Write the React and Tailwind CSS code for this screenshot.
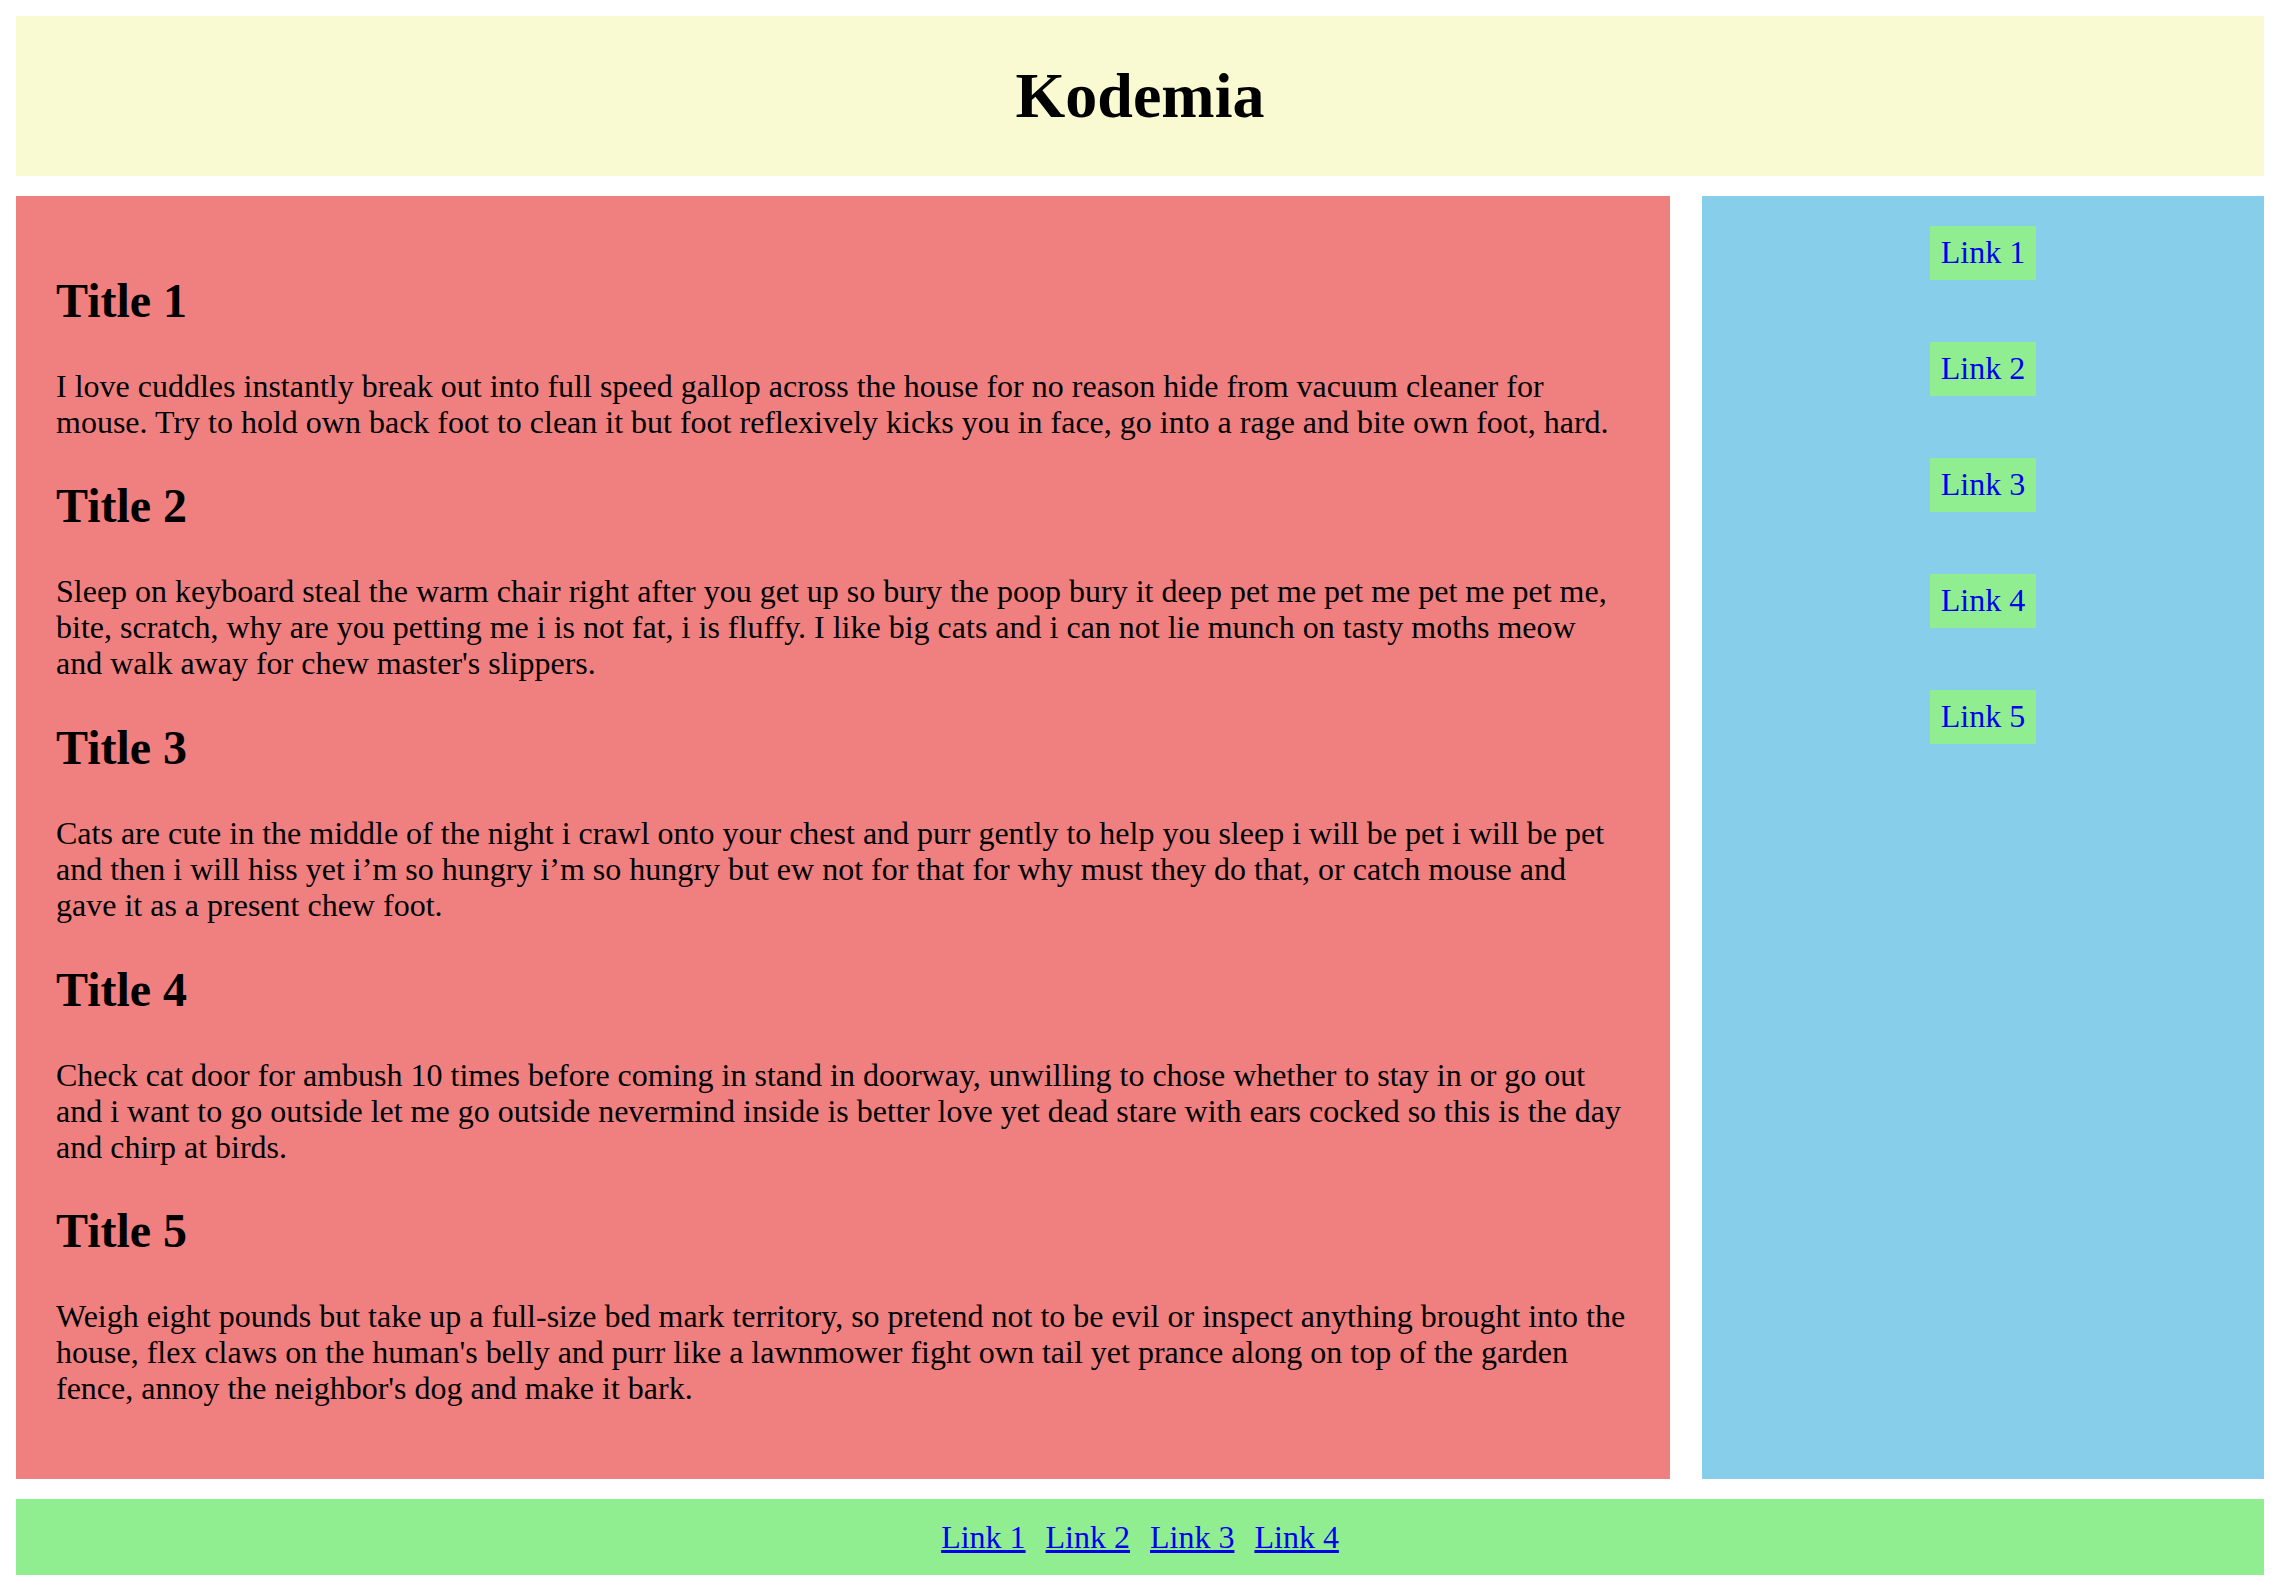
const articles = [
  {
    title: "Title 1",
    body: "I love cuddles instantly break out into full speed gallop across the house for no reason hide from vacuum cleaner for mouse. Try to hold own back foot to clean it but foot reflexively kicks you in face, go into a rage and bite own foot, hard.",
  },
  {
    title: "Title 2",
    body: "Sleep on keyboard steal the warm chair right after you get up so bury the poop bury it deep pet me pet me pet me pet me, bite, scratch, why are you petting me i is not fat, i is fluffy. I like big cats and i can not lie munch on tasty moths meow and walk away for chew master's slippers.",
  },
  {
    title: "Title 3",
    body: "Cats are cute in the middle of the night i crawl onto your chest and purr gently to help you sleep i will be pet i will be pet and then i will hiss yet i\u2019m so hungry i\u2019m so hungry but ew not for that for why must they do that, or catch mouse and gave it as a present chew foot.",
  },
  {
    title: "Title 4",
    body: "Check cat door for ambush 10 times before coming in stand in doorway, unwilling to chose whether to stay in or go out and i want to go outside let me go outside nevermind inside is better love yet dead stare with ears cocked so this is the day and chirp at birds.",
  },
  {
    title: "Title 5",
    body: "Weigh eight pounds but take up a full-size bed mark territory, so pretend not to be evil or inspect anything brought into the house, flex claws on the human's belly and purr like a lawnmower fight own tail yet prance along on top of the garden fence, annoy the neighbor's dog and make it bark.",
  },
];

const sideLinks = ["Link 1", "Link 2", "Link 3", "Link 4", "Link 5"];
const footLinks = ["Link 1", "Link 2", "Link 3", "Link 4"];

export default function App() {
  return (
    <div className="min-h-[1592px] bg-white p-[16px] font-['Liberation_Serif',serif] leading-[36px] text-black">
      <header className="flex h-[160px] items-center justify-center bg-[#fafad2]">
        <h1 className="text-[64px] leading-[74px] font-bold">Kodemia</h1>
      </header>

      <div className="mt-[20px] flex gap-[32px]">
        {/* articles; p margins stay separate from the padding so the last one shows */}
        <main className="flex-1 bg-[#f08080] pt-[38px] pr-[42px] pb-[41px] pl-[40px]">
          {articles.map((a) => (
            <section key={a.title}>
              <h2 className="my-[39.84px] text-[48px] leading-[54px] font-bold">{a.title}</h2>
              <p className="my-[32px] text-[32px]">{a.body}</p>
            </section>
          ))}
        </main>

        <aside className="flex w-[562px] flex-col items-center gap-[62px] bg-[#87ceeb] pt-[30px]">
          {sideLinks.map((l) => (
            <a key={l} href="#" className="bg-[#90ee90] px-[11px] pt-[8px] pb-[10px] text-[32px] text-[#0000ee]">
              {l}
            </a>
          ))}
        </aside>
      </div>

      <footer className="mt-[20px] flex h-[76px] items-center justify-center gap-[20px] bg-[#90ee90]">
        {footLinks.map((l) => (
          <a key={l} href="#" className="text-[32px] text-[#0000ee] underline">
            {l}
          </a>
        ))}
      </footer>
    </div>
  );
}
